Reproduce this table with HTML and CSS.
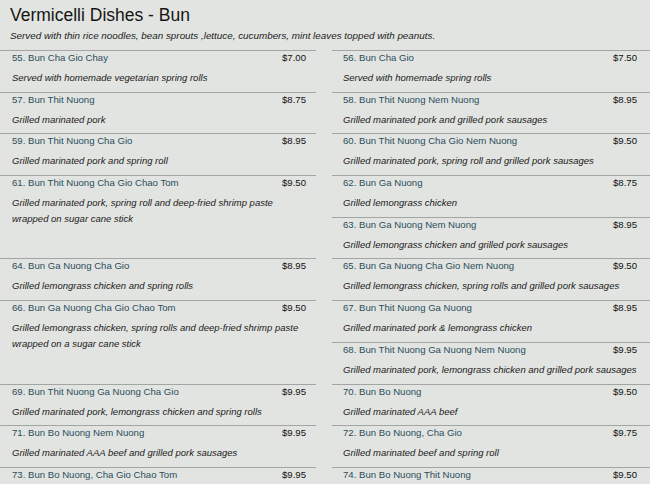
FILE: index.html
```html
<!DOCTYPE html>
<html>
<head>
<meta charset="utf-8">
<link rel="stylesheet" href="styles.css">
</head>
<body>
<div class="page">
  <h1 class="title">Vermicelli Dishes - Bun</h1>
  <p class="intro">Served with thin rice noodles, bean sprouts ,lettuce, cucumbers, mint leaves topped with peanuts.</p>
  <div class="columns">
    <div class="col col-left">
      <div class="item"><div class="head"><span class="name">55. Bun Cha Gio Chay</span><span class="price">$7.00</span></div><div class="desc">Served with homemade vegetarian spring rolls</div></div>
      <div class="item"><div class="head"><span class="name">57. Bun Thit Nuong</span><span class="price">$8.75</span></div><div class="desc">Grilled marinated pork</div></div>
      <div class="item"><div class="head"><span class="name">59. Bun Thit Nuong Cha Gio</span><span class="price">$8.95</span></div><div class="desc">Grilled marinated pork and spring roll</div></div>
      <div class="item tall"><div class="head"><span class="name">61. Bun Thit Nuong Cha Gio Chao Tom</span><span class="price">$9.50</span></div><div class="desc">Grilled marinated pork, spring roll and deep-fried shrimp paste<br>wrapped on sugar cane stick</div></div>
      <div class="item"><div class="head"><span class="name">64. Bun Ga Nuong Cha Gio</span><span class="price">$8.95</span></div><div class="desc">Grilled lemongrass chicken and spring rolls</div></div>
      <div class="item tall"><div class="head"><span class="name">66. Bun Ga Nuong Cha Gio Chao Tom</span><span class="price">$9.50</span></div><div class="desc">Grilled lemongrass chicken, spring rolls and deep-fried shrimp paste<br>wrapped on a sugar cane stick</div></div>
      <div class="item"><div class="head"><span class="name">69. Bun Thit Nuong Ga Nuong Cha Gio</span><span class="price">$9.95</span></div><div class="desc">Grilled marinated pork, lemongrass chicken and spring rolls</div></div>
      <div class="item"><div class="head"><span class="name">71. Bun Bo Nuong Nem Nuong</span><span class="price">$9.95</span></div><div class="desc">Grilled marinated AAA beef and grilled pork sausages</div></div>
      <div class="item last"><div class="head"><span class="name">73. Bun Bo Nuong, Cha Gio Chao Tom</span><span class="price">$9.95</span></div></div>
    </div>
    <div class="col col-right">
      <div class="item"><div class="head"><span class="name">56. Bun Cha Gio</span><span class="price">$7.50</span></div><div class="desc">Served with homemade spring rolls</div></div>
      <div class="item"><div class="head"><span class="name">58. Bun Thit Nuong Nem Nuong</span><span class="price">$8.95</span></div><div class="desc">Grilled marinated pork and grilled pork sausages</div></div>
      <div class="item"><div class="head"><span class="name">60. Bun Thit Nuong Cha Gio Nem Nuong</span><span class="price">$9.50</span></div><div class="desc">Grilled marinated pork, spring roll and grilled pork sausages</div></div>
      <div class="item"><div class="head"><span class="name">62. Bun Ga Nuong</span><span class="price">$8.75</span></div><div class="desc">Grilled lemongrass chicken</div></div>
      <div class="item"><div class="head"><span class="name">63. Bun Ga Nuong Nem Nuong</span><span class="price">$8.95</span></div><div class="desc">Grilled lemongrass chicken and grilled pork sausages</div></div>
      <div class="item"><div class="head"><span class="name">65. Bun Ga Nuong Cha Gio Nem Nuong</span><span class="price">$9.50</span></div><div class="desc">Grilled lemongrass chicken, spring rolls and grilled pork sausages</div></div>
      <div class="item"><div class="head"><span class="name">67. Bun Thit Nuong Ga Nuong</span><span class="price">$8.95</span></div><div class="desc">Grilled marinated pork &amp; lemongrass chicken</div></div>
      <div class="item"><div class="head"><span class="name">68. Bun Thit Nuong Ga Nuong Nem Nuong</span><span class="price">$9.95</span></div><div class="desc">Grilled marinated pork, lemongrass chicken and grilled pork sausages</div></div>
      <div class="item"><div class="head"><span class="name">70. Bun Bo Nuong</span><span class="price">$9.50</span></div><div class="desc">Grilled marinated AAA beef</div></div>
      <div class="item"><div class="head"><span class="name">72. Bun Bo Nuong, Cha Gio</span><span class="price">$9.75</span></div><div class="desc">Grilled marinated beef and spring roll</div></div>
      <div class="item last"><div class="head"><span class="name">74. Bun Bo Nuong Thit Nuong</span><span class="price">$9.50</span></div></div>
    </div>
  </div>
</div>
</body>
</html>
```

FILE: styles.css
```css
html, body {
  margin: 0;
  padding: 0;
  background: #e2e4e1;
  overflow: hidden;
}

body {
  font-family: "Liberation Sans", Arial, sans-serif;
  color: #1c1c1c;
  width: 650px;
  height: 484px;
}

.page {
  padding-top: 4px;
}

.title {
  margin: 0 0 0 10px;
  font-size: 17.5px;
  line-height: 22px;
  font-weight: normal;
  color: #151515;
}

.intro {
  margin: 3px 0 7px 10px;
  font-size: 9.85px;
  line-height: 14px;
  font-style: italic;
  color: #1c1c1c;
}

.columns {
  display: grid;
  grid-template-columns: 316px 318px;
  column-gap: 16px;
}

.col {
  display: flex;
  flex-direction: column;
}

.item {
  box-sizing: border-box;
  height: 41.7px;
  border-top: 1px solid #a3a5a2;
  flex: none;
}

.item.tall {
  height: 83.4px;
}

.item.last {
  height: 17px;
}

.col-left .item {
  padding: 0 10px 0 12px;
}

.col-right .item {
  padding: 0 13px 0 11px;
}

.head {
  display: flex;
  justify-content: space-between;
  align-items: baseline;
  font-size: 9.6px;
  line-height: 14px;
}

.name {
  color: #2a4d5c;
}

.price {
  color: #111;
}

.desc {
  margin-top: 5px;
  font-size: 9.5px;
  line-height: 16px;
  font-style: italic;
  white-space: nowrap;
  color: #1a1a1a;
}
```
